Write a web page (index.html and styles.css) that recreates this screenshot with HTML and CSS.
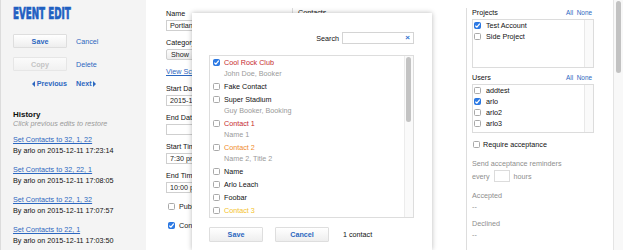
FILE: index.html
```html
<!DOCTYPE html>
<html lang="en">
<head>
    <meta charset="UTF-8">
    <title>Event Edit</title>
    <link rel="stylesheet" href="styles.css">
</head>
<body>
<div class="page">
    <aside class="sidebar">
        <h1 class="title">EVENT EDIT</h1>
        <div class="actions">
            <button class="btn">Save</button><a class="link">Cancel</a>
            <button class="btn" disabled>Copy</button><a class="link">Delete</a>
            <a class="nav prev"><i class="tri-left"></i>Previous</a><a class="nav next">Next<i class="tri-right"></i></a>
        </div>
        <h2 class="history-title">History</h2>
        <p class="hint">Click previous edits to restore</p>
        <ul class="history">
            <li><a>Set Contacts to 32, 1, 22</a><span>By arlo on 2015-12-11 17:23:14</span></li>
            <li><a>Set Contacts to 32, 22, 1</a><span>By arlo on 2015-12-11 17:08:05</span></li>
            <li><a>Set Contacts to 22, 1, 32</a><span>By arlo on 2015-12-11 17:07:57</span></li>
            <li><a>Set Contacts to 22, 1</a><span>By arlo on 2015-12-11 17:03:50</span></li>
        </ul>
    </aside>

    <main class="form">
        <div class="field"><label>Name</label><div class="input">Portland</div></div>
        <div class="field"><label>Category</label><div class="input select">Show</div></div>
        <a class="view-link">View Schedule</a>
        <div class="field"><label>Start Date</label><div class="input">2015-12-11</div></div>
        <div class="field"><label>End Date</label><div class="input"></div></div>
        <div class="field"><label>Start Time</label><div class="input">7:30 pm</div></div>
        <div class="field"><label>End Time</label><div class="input">10:00 pm</div></div>
        <div class="check-row first"><span class="cb"></span>Published</div>
        <div class="check-row"><span class="cb on"></span>Contacts confirmed</div>
    </main>

    <section class="contacts">
        <label>Contacts</label>
    </section>

    <section class="sharing">
        <div class="box-head"><span>Projects</span><span class="all-none">All&nbsp; None</span></div>
        <div class="pick-box">
            <div class="pick-items">
                <div class="pick"><span class="cb on"></span>Test Account</div>
                <div class="pick"><span class="cb"></span>Side Project</div>
            </div>
            <div class="pick-track"></div>
        </div>
        <div class="box-head users"><span>Users</span><span class="all-none">All&nbsp; None</span></div>
        <div class="pick-box">
            <div class="pick-items">
                <div class="pick"><span class="cb"></span>addtest</div>
                <div class="pick"><span class="cb on"></span>arlo</div>
                <div class="pick"><span class="cb"></span>arlo2</div>
                <div class="pick"><span class="cb"></span>arlo3</div>
            </div>
            <div class="pick-track"></div>
        </div>
        <div class="require"><span class="cb"></span>Require acceptance</div>
        <div class="muted reminders">Send acceptance reminders</div>
        <div class="muted every">every <span class="hours-box"></span> hours</div>
        <div class="muted stat-label">Accepted</div>
        <div class="muted stat-value">--</div>
        <div class="muted stat-label">Declined</div>
        <div class="muted stat-value">--</div>
    </section>

    <div class="scrollbar"><div class="thumb"></div></div>
</div>

<div class="modal">
    <div class="search-row">
        <span>Search</span>
        <div class="search-box"><span class="clear">&times;</span></div>
    </div>
    <div class="contact-list">
        <div class="contact-items">
            <div class="contact">
                <div class="contact-main red"><span class="cb on"></span>Cool Rock Club</div>
                <div class="contact-sub">John Doe, Booker</div>
            </div>
            <div class="contact"><div class="contact-main"><span class="cb"></span>Fake Contact</div></div>
            <div class="contact">
                <div class="contact-main"><span class="cb"></span>Super Stadium</div>
                <div class="contact-sub">Guy Booker, Booking</div>
            </div>
            <div class="contact">
                <div class="contact-main red"><span class="cb"></span>Contact 1</div>
                <div class="contact-sub">Name 1</div>
            </div>
            <div class="contact">
                <div class="contact-main orange"><span class="cb"></span>Contact 2</div>
                <div class="contact-sub">Name 2, Title 2</div>
            </div>
            <div class="contact"><div class="contact-main"><span class="cb"></span>Name</div></div>
            <div class="contact"><div class="contact-main"><span class="cb"></span>Arlo Leach</div></div>
            <div class="contact"><div class="contact-main"><span class="cb"></span>Foobar</div></div>
            <div class="contact"><div class="contact-main yellow"><span class="cb"></span>Contact 3</div></div>
        </div>
        <div class="list-track"><div class="list-thumb"></div></div>
    </div>
    <div class="modal-actions">
        <button class="btn">Save</button>
        <button class="btn">Cancel</button>
        <span class="count">1 contact</span>
    </div>
</div>
</body>
</html>
```

FILE: styles.css
```css
* { box-sizing: border-box; }

body {
    margin: 0;
    font-family: "Liberation Sans", Arial, sans-serif;
    font-size: 7.2px;
    color: #222;
    background: #fff;
    overflow: hidden;
}

a { color: #2c67c0; cursor: pointer; }

.page {
    display: flex;
    height: 250px;
    overflow: hidden;
}

/* left column */
.sidebar {
    width: 146px;
    flex: none;
    background: #f4f4f4;
    border-left: 1px solid #dcdcdc;
    padding: 7px 0 0 12px;
    overflow: hidden;
}
.title {
    margin: 0;
    height: 15px;
    line-height: 15px;
    font-family: "DejaVu Sans Condensed", "DejaVu Sans", sans-serif;
    font-size: 15px;
    font-weight: bold;
    color: #1f5fc2;
    -webkit-text-stroke: 0.7px #1f5fc2;
    transform: scaleX(0.65);
    transform-origin: left center;
    white-space: nowrap;
}
.actions {
    margin-top: 12px;
    display: grid;
    grid-template-columns: 54px auto;
    grid-template-rows: 14px 14px 8px;
    column-gap: 9px;
    row-gap: 9px;
    align-items: center;
}
.btn {
    height: 14px;
    padding: 0;
    font-family: inherit;
    font-size: 7.2px;
    font-weight: bold;
    color: #2c67c0;
    background: linear-gradient(#ffffff, #eeeeee);
    border: 1px solid #dedede;
    border-radius: 1px;
}
.btn:disabled {
    color: #c4c4c4;
    background: linear-gradient(#fbfbfb, #f1f1f1);
    border-color: #e6e6e6;
}
.link { line-height: 9px; }
.nav {
    font-weight: bold;
    line-height: 8px;
    display: flex;
    align-items: center;
}
.prev { justify-content: flex-end; }
.tri-left, .tri-right {
    display: inline-block;
    width: 0;
    height: 0;
    border-top: 3px solid transparent;
    border-bottom: 3px solid transparent;
}
.tri-left { border-right: 3px solid #2c67c0; margin-right: 2px; }
.tri-right { border-left: 3px solid #2c67c0; margin-left: 1px; }

.history-title {
    margin: 22px 0 0;
    font-size: 8px;
    line-height: 9px;
    color: #111;
}
.hint {
    margin: 0;
    line-height: 9px;
    font-style: italic;
    color: #9a9a9a;
}
.history {
    list-style: none;
    margin: 6px 0 0;
    padding: 0;
}
.history li {
    display: flex;
    flex-direction: column;
    margin-bottom: 8px;
}
.history a {
    text-decoration: underline;
    line-height: 11px;
}
.history span {
    line-height: 11px;
    color: #111;
}

/* middle form */
.form {
    width: 146px;
    flex: none;
    padding: 9px 0 0 20px;
}
.field { margin-bottom: 7px; }
.field label {
    display: block;
    line-height: 10px;
    margin-bottom: 1px;
    color: #111;
}
.input {
    width: 120px;
    height: 11px;
    line-height: 9px;
    padding: 0 3px;
    border: 1px solid #cfcfcf;
    background: #fff;
    color: #222;
}
.select {
    background: linear-gradient(#fdfdfd, #ececec);
    border-radius: 2px;
    padding-left: 4px;
}
.view-link {
    display: block;
    margin: 2px 0 7px;
    line-height: 10px;
    text-decoration: underline;
}
.check-row {
    display: flex;
    align-items: center;
    gap: 4px;
    height: 10px;
    margin-top: 9px;
    padding-left: 2px;
}
.check-row.first { margin-top: 8px; }

.cb {
    flex: none;
    width: 7px;
    height: 7px;
    border: 1px solid #a9a9a9;
    border-radius: 1.5px;
    background: #fff;
}
.cb.on {
    border-color: #2a76e0;
    background: #2f7ce6 url("data:image/svg+xml,%3Csvg xmlns='http://www.w3.org/2000/svg' viewBox='0 0 7 7'%3E%3Cpath d='M1.3 3.6 2.9 5.1 5.8 1.6' fill='none' stroke='%23fff' stroke-width='1.3'/%3E%3C/svg%3E") center / 7px 7px no-repeat;
}

/* contacts column (mostly under the dialog) */
.contacts {
    width: 174px;
    flex: none;
    margin-top: 8px;
    border-left: 1px solid #dddddd;
    padding-left: 5px;
}
.contacts label { line-height: 9px; color: #111; }

/* right column */
.sharing {
    width: 147px;
    flex: none;
    margin-top: 8px;
    border-left: 1px solid #dddddd;
    padding-left: 5px;
}
.box-head {
    width: 122px;
    display: flex;
    justify-content: space-between;
    line-height: 9px;
    margin-bottom: 2px;
    padding-right: 2px;
    color: #111;
}
.box-head.users { margin-top: 5px; }
.all-none { color: #2c67c0; font-size: 6.4px; }
.pick-box {
    width: 122px;
    height: 49px;
    border: 1px solid #dcdcdc;
    display: flex;
    overflow: hidden;
}
.pick-items { flex: 1; padding-left: 1px; }
.pick {
    display: flex;
    align-items: center;
    gap: 5px;
    height: 11px;
    color: #111;
}
.pick-track {
    width: 9px;
    border-left: 1px solid #e9e9e9;
    background: #fafafa;
}
.require {
    display: flex;
    align-items: center;
    gap: 3px;
    height: 9px;
    margin-top: 7px;
    padding-left: 1px;
    color: #111;
}
.muted { color: #8e8e8e; line-height: 9px; }
.reminders { margin-top: 10px; }
.every {
    display: flex;
    align-items: center;
    height: 12px;
    margin-top: 2px;
}
.hours-box {
    width: 16px;
    height: 12px;
    margin: 0 4px;
    border: 1px solid #dcdcdc;
}
.stat-label { margin-top: 8.5px; }
.stat-value { margin-top: 2px; }

.scrollbar {
    width: 10px;
    flex: none;
    border-left: 1px solid #e4e4e4;
    background: #f8f8f8;
    padding: 1px 0 0 2px;
}
.thumb {
    width: 5px;
    height: 72px;
    border-radius: 3px;
    background: #c2c2c2;
}

/* contact picker dialog */
.modal {
    position: absolute;
    left: 192px;
    top: 13px;
    width: 240px;
    height: 237px;
    background: #fff;
    box-shadow: 0 0 5px rgba(0, 0, 0, 0.28);
    padding: 19px 18px 0 17px;
}
.search-row {
    display: flex;
    justify-content: flex-end;
    align-items: center;
    gap: 3px;
    height: 12px;
    color: #111;
}
.search-box {
    width: 72px;
    height: 12px;
    border: 1px solid #d4d4d4;
    display: flex;
    justify-content: flex-end;
    align-items: center;
    padding-right: 3px;
}
.clear {
    color: #2f70d0;
    font-weight: bold;
    font-size: 8px;
    line-height: 8px;
}
.contact-list {
    margin-top: 11px;
    width: 205px;
    height: 163px;
    border: 1px solid #dddddd;
    display: flex;
}
.contact-items { flex: 1; padding-left: 3px; }
.contact { padding: 1.5px 0; }
.contact-main {
    display: flex;
    align-items: center;
    gap: 4px;
    height: 10px;
    color: #111;
}
.contact-sub {
    line-height: 11px;
    padding-left: 11px;
    color: #9a9a9a;
}
.red { color: #c62a2f; }
.orange { color: #ef8b2c; }
.yellow { color: #f4c22b; }
.list-track {
    width: 9px;
    border-left: 1px solid #ececec;
    background: #fafafa;
    padding: 1px 0 0 1px;
}
.list-thumb {
    width: 5px;
    height: 65px;
    border-radius: 3px;
    background: #c3c3c3;
}
.modal-actions {
    margin-top: 9px;
    display: flex;
    align-items: center;
}
.modal-actions .btn {
    width: 54px;
    height: 15px;
    margin-right: 12px;
}
.count { margin-left: 2px; color: #111; }
```
